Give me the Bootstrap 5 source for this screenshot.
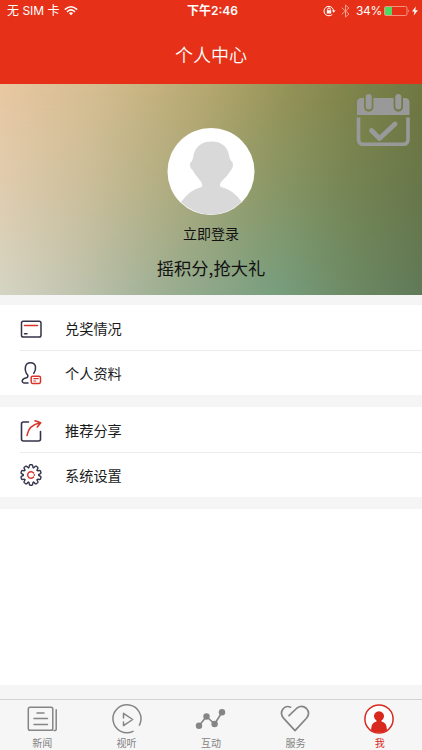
<!DOCTYPE html>
<html lang="zh-CN">
<head>
<meta charset="utf-8">
<meta name="viewport" content="width=device-width, initial-scale=1">
<title>个人中心</title>
<link href="https://cdn.jsdelivr.net/npm/bootstrap@5.3.0/dist/css/bootstrap.min.css" rel="stylesheet">
<style>
body{font-family:Inter,"Noto Sans CJK SC",sans-serif;background:#f5f5f5;height:750px;overflow:hidden;color:#1a1a1a}
svg{display:block;flex:none;fill:none;stroke-linecap:round;stroke-linejoin:round}
.app-top{background:#e63118;height:84px}
.status{height:22px;font-size:12px;line-height:22px}
.status>div{flex:1 1 0}
.carrier{padding-left:7px}
.bluetooth{margin-left:5px}
.level{margin:0 2px 0 6px;letter-spacing:-.3px}
.bolt{margin:0 0 0 2px}
.app-title{font-family:"Noto Sans CJK SC",sans-serif;font-size:18px;line-height:24px;font-weight:350;padding-top:20px}
.hero{height:211px;background:linear-gradient(101deg,#e9c8a3 0%,#d3bc8f 22%,#b4a76f 45%,#929257 63%,#7b8149 79%,#66703f 100%);isolation:isolate}
.hero::before{content:"";position:absolute;inset:0;z-index:-1;background:linear-gradient(97deg,#dcdacb 0%,#c0c4b0 22%,#98ad92 44%,#769f81 68%,#6c8b67 84%,#607a5a 100%);-webkit-mask-image:linear-gradient(182deg,transparent 8%,rgba(0,0,0,.36) 50%,#000 100%);mask-image:linear-gradient(182deg,transparent 8%,rgba(0,0,0,.36) 50%,#000 100%)}
.calendar{right:12px;top:9px}
.avatar{margin-top:44px}
.login{font-size:14px;line-height:20px;margin-top:7px;color:#111}
.slogan{font-size:17.3px;line-height:26px;margin-top:12px;color:#111}
.login,.slogan,.entry,.tab{font-family:"Noto Sans CJK SC",sans-serif}
.gap-s{height:10px}.gap-m{height:12px}
.entry{height:45px;margin-left:20px;padding-top:2px;font-size:14.2px;line-height:20px}
.entry span{margin:-1px 0 0 23px}
.entry+.entry{border-top:1px solid #ececec;padding-top:0}
.blank{height:176px}
.gap-l{height:14px}
.tabs{height:51px;border-top:1px solid #d2d2d2;background:#f6f6f6}
.tab{flex:1 1 0;font-size:10px;line-height:14px;color:#828282;padding-top:3px}
.tab svg{margin:0 1px 2px 0}
.tab.current{color:#d9281e}
</style>
<script src="https://cdn.jsdelivr.net/npm/bootstrap@5.3.0/dist/js/bootstrap.bundle.min.js"></script>
</head>
<body>
<header class="app-top text-white">
  <div class="status d-flex align-items-center">
    <div class="carrier d-flex align-items-center">
      <span>无 SIM 卡</span>
      <svg class="ms-1" width="14" height="12" viewBox="0 0 14 12" stroke="#fff" stroke-width="1.6"><path d="M1.4 4.2Q7-.7 12.6 4.2M3.5 6.5Q7 3.3 10.5 6.5"/><path d="M7 10.3 4.9 8.1Q7 6.4 9.1 8.1Z" fill="#fff" stroke="none"/></svg>
    </div>
    <div class="text-center fw-semibold">下午2:46</div>
    <div class="d-flex align-items-center justify-content-end pe-1">
      <svg width="13" height="12" viewBox="0 0 13 12" stroke="#fff"><path d="M8.9 9.8A4.8 4.8 0 1 1 10.6 6.6"/><path d="M9 5.4h3.5l-1.8 2.4z" fill="#fff" stroke="none"/><path d="M3.8 5.2h4.4v3.3H3.8z" fill="#fff" stroke="none"/><path d="M4.7 5V4.2a1.3 1.3 0 0 1 2.6 0V5"/></svg>
      <svg class="bluetooth" width="9" height="14" viewBox="0 0 9 14" stroke="#f3a08f"><path d="M1 4l7 6-3.5 3V1L8 4l-7 6"/></svg>
      <span class="level">34%</span>
      <svg width="26" height="12" viewBox="0 0 26 12"><rect x=".5" y="1.5" width="22.5" height="9" rx="1.5" stroke="#f3927f"/><path d="M1 2h7v8H1z" fill="#4cd964"/><path d="M24 4.2q1.6 1.8 0 3.6z" fill="#f6b0a3"/></svg>
      <svg class="bolt" width="6" height="10" viewBox="0 0 6 10"><path d="M3.8.5 0 5.6h2.5L1.7 9.5 6 4.2H3.3z" fill="#fff"/></svg>
    </div>
  </div>
  <h1 class="app-title text-center m-0">个人中心</h1>
</header>

<main>
  <section class="hero position-relative d-flex flex-column align-items-center">
    <svg class="calendar position-absolute" width="54" height="54" viewBox="0 0 54 54">
      <path d="M1 22V9.5q0-4.500 4.500-4.500H8v9a4.700 4.700 0 0 0 9.400 0V5h20.200v9a4.700 4.700 0 0 0 9.400 0V5h2q4.500 0 4.500 4.500V22z" fill="#999"/>
      <path d="M12.700 4v9.500M42.300 4v9.500" stroke="#999" stroke-width="6"/>
      <path d="M2.500 24.500v22q0 4.800 4.800 4.800h39.900q4.800 0 4.800-4.800v-22" stroke="#999" stroke-width="3.600" stroke-linecap="butt"/>
      <path d="M15.500 37.500l8 8L39 31" stroke="#999" stroke-width="4.800"/>
    </svg>
    <svg class="avatar" width="88" height="88" viewBox="0 0 88 88">
      <circle cx="44" cy="43.5" r="43.5" fill="#fff"/>
      <path d="M14 74Q23 61.500 34.500 59Q36.500 57 33.500 53Q29 48 25.500 42Q21.500 38.500 23.500 34.500Q26 33 26.500 27Q30 13.500 44.500 13.500Q59 13.500 62 27Q62.500 32 65.500 34.500Q67 38 64 42Q60 49 54.500 53.500Q51.500 57 54 59Q67 62 74.500 74A42.700 42.700 0 0 1 14 74Z" fill="#d9d9d9"/>
    </svg>
    <div class="login">立即登录</div>
    <div class="slogan">摇积分,抢大礼</div>
  </section>

  <div class="gap-s"></div>
  <section class="bg-white">
    <div class="entry d-flex align-items-center">
      <svg width="22" height="22" viewBox="0 0 22 22" stroke="#33334a" stroke-width="1.5"><rect x="1.5" y="3.2" width="19.5" height="15.8" rx="1.8"/><path d="M4.500 15.700h2.500"/><path d="M4.500 7.600h13" stroke="#d9342b"/></svg>
      <span>兑奖情况</span>
    </div>
    <div class="entry d-flex align-items-center">
      <svg width="22" height="24" viewBox="0 0 22 24" stroke="#33334a" stroke-width="1.5"><path d="M8 22H4.500Q2 22 2.300 19.500Q3 17.500 6.500 16.800Q8.200 16.400 7.700 14Q4.500 11 5.500 5.500Q6.500 1.800 10.500 1.800Q14.500 1.800 15.500 5.500Q16 9.500 13.800 12.300"/><g stroke="#d9342b"><rect x="11.2" y="15.2" width="9.3" height="7.2" rx="1.4"/><path d="M13.800 17.700h4.400M13.800 20h1.800" stroke-width="1.2"/></g></svg>
      <span>个人资料</span>
    </div>
  </section>
  <div class="gap-m"></div>
  <section class="bg-white">
    <div class="entry d-flex align-items-center">
      <svg width="22" height="24" viewBox="0 0 22 24" stroke="#33334a" stroke-width="1.6"><path d="M8.500 3H3.500Q1.500 3 1.500 5V20Q1.500 22 3.500 22H18.500Q20.500 22 20.500 20V12.500"/><path d="M7 16.500Q8.500 6 20.500 3.700M15 1.700l5.700 2-3.400 4.300" stroke="#d9342b"/></svg>
      <span>推荐分享</span>
    </div>
    <div class="entry d-flex align-items-center">
      <svg width="22" height="22" viewBox="-11 -11 22 22" stroke="#33334a" stroke-width="1.4">
        <defs><path id="tooth" d="M-2.380-7.320Q-1.700-7.800-1.800-8.600Q-1.800-10.100-.9-10.200H.9Q1.800-10.100 1.800-8.600Q1.700-7.800 2.380-7.320"/></defs>
        <use href="#tooth"/><use href="#tooth" transform="rotate(36)"/><use href="#tooth" transform="rotate(72)"/><use href="#tooth" transform="rotate(108)"/><use href="#tooth" transform="rotate(144)"/><use href="#tooth" transform="rotate(180)"/><use href="#tooth" transform="rotate(216)"/><use href="#tooth" transform="rotate(252)"/><use href="#tooth" transform="rotate(288)"/><use href="#tooth" transform="rotate(324)"/>
        <path d="M2.600-2A3.300 3.300 0 1 0 2.600 2M3.300-.3v.6" stroke="#d9342b"/>
      </svg>
      <span>系统设置</span>
    </div>
  </section>
  <div class="gap-m"></div>
  <div class="blank bg-white"></div>
  <div class="gap-l"></div>
</main>

<nav class="tabs d-flex">
  <div class="tab d-flex flex-column align-items-center">
    <svg width="32" height="31" viewBox="0 0 32 31" stroke="#858585" stroke-width="1.5"><rect x="2.3" y="4.3" width="24.5" height="23" rx="1.8"/><path d="M30.200 6.700V26.500Q30.200 27.500 28 27.500"/><path d="M11 10h7M8 15.500h13.500M8 21.500h13.500"/></svg>
    新闻
  </div>
  <div class="tab d-flex flex-column align-items-center">
    <svg width="32" height="31" viewBox="0 0 32 31" stroke="#858585" stroke-width="1.5"><path d="M23 28.400A14 14 0 1 1 29.400 22.200"/><path d="M13.500 15V10.300L22.700 16.500 13.500 22.700V19"/></svg>
    视听
  </div>
  <div class="tab d-flex flex-column align-items-center">
    <svg width="32" height="31" viewBox="0 0 32 31" stroke="#858585" stroke-width="1.6"><path d="M4 22.800 11.500 13.500 19.600 21 27 9.300"/><g fill="#858585" stroke="none"><circle cx="4" cy="22.8" r="3.2"/><circle cx="11.5" cy="13.5" r="3.2"/><circle cx="19.6" cy="21" r="3.2"/><circle cx="27" cy="9.3" r="3.2"/></g></svg>
    互动
  </div>
  <div class="tab d-flex flex-column align-items-center">
    <svg width="32" height="31" viewBox="0 0 32 31" stroke="#858585" stroke-width="1.7"><path d="M11.500 4.200Q7.500 2.300 4.300 5.500Q.5 10.500 4.500 15.200L16 27.700 27.700 15Q31.500 10 27.500 5.500Q23 1.500 18 5L10 12.600"/></svg>
    服务
  </div>
  <div class="tab current d-flex flex-column align-items-center">
    <svg width="32" height="31" viewBox="0 0 32 31"><circle cx="16" cy="16" r="14.1" fill="#fff" stroke="#d9281e" stroke-width="1.5"/><path d="M8.200 27.700Q7.500 20 13.500 18.500V17.500A5 5 0 1 1 18.500 17.500V18.500Q24.500 20 23.800 27.700Q16 32 8.200 27.700Z" fill="#d9281e"/></svg>
    我
  </div>
</nav>
</body>
</html>
